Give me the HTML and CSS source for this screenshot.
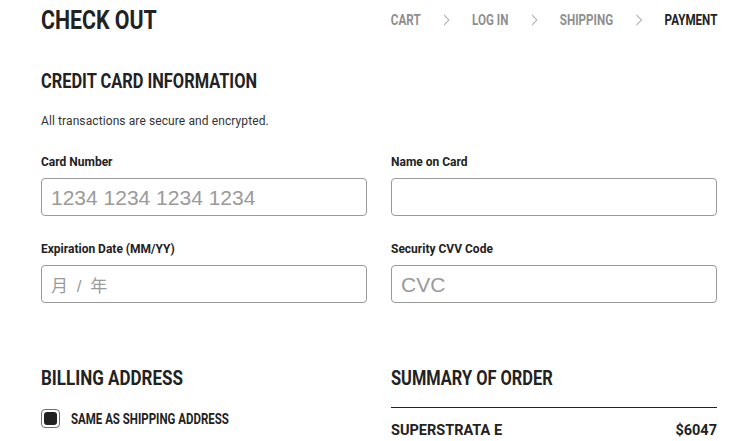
FILE: index.html
```html
<!DOCTYPE html>
<html lang="en">
<head>
<meta charset="utf-8">
<title>Check Out</title>
<link rel="stylesheet" href="styles.css">
</head>
<body>
<div class="page">
  <header class="topbar">
    <h1 class="title"><span class="cond">CHECK OUT</span></h1>
    <nav class="crumbs">
      <span class="crumb">CART</span>
      <svg class="chev" width="8" height="12" viewBox="0 0 8 12"><polyline points="1,1 7,6 1,11" fill="none" stroke="#b0b0b0" stroke-width="1.1"/></svg>
      <span class="crumb">LOG IN</span>
      <svg class="chev" width="8" height="12" viewBox="0 0 8 12"><polyline points="1,1 7,6 1,11" fill="none" stroke="#b0b0b0" stroke-width="1.1"/></svg>
      <span class="crumb">SHIPPING</span>
      <svg class="chev" width="8" height="12" viewBox="0 0 8 12"><polyline points="1,1 7,6 1,11" fill="none" stroke="#b0b0b0" stroke-width="1.1"/></svg>
      <span class="crumb active">PAYMENT</span>
    </nav>
  </header>

  <section class="card-info">
    <h2 class="section-title"><span class="cond">CREDIT CARD INFORMATION</span></h2>
    <p class="note">All transactions are secure and encrypted.</p>
    <div class="fields">
      <div class="field">
        <label class="label">Card Number</label>
        <div class="input placeholder">1234 1234 1234 1234</div>
      </div>
      <div class="field">
        <label class="label">Name on Card</label>
        <div class="input"></div>
      </div>
      <div class="field">
        <label class="label">Expiration Date (MM/YY)</label>
        <div class="input placeholder cjk">月 / 年</div>
      </div>
      <div class="field">
        <label class="label">Security CVV Code</label>
        <div class="input placeholder">CVC</div>
      </div>
    </div>
  </section>

  <section class="bottom">
    <div class="billing">
      <h2 class="section-title"><span class="cond wide">BILLING ADDRESS</span></h2>
      <div class="check-row">
        <span class="checkbox"><span class="check-fill"></span></span>
        <span class="check-label cond">SAME AS SHIPPING ADDRESS</span>
      </div>
    </div>
    <div class="summary">
      <h2 class="section-title"><span class="cond">SUMMARY OF ORDER</span></h2>
      <div class="summary-line">
        <span class="item">SUPERSTRATA E</span>
        <span class="price">$6047</span>
      </div>
    </div>
  </section>
</div>
</body>
</html>
```
FILE: styles.css
```css
* { box-sizing: border-box; }
html, body { margin: 0; padding: 0; background: #fff; }
body {
  font-family: Roboto, "Noto Sans", sans-serif;
  color: #222;
  height: 441px;
  overflow: hidden;
}
.page {
  padding: 0 16px 0 41px;
}
.cond {
  display: inline-block;
  white-space: nowrap;
  transform: scaleX(0.82);
  transform-origin: left center;
}
.cond.wide { transform: scaleX(0.85); }

.topbar {
  height: 40px;
  display: flex;
  align-items: center;
  justify-content: space-between;
}
.title {
  margin: 0;
  font-size: 26px;
  line-height: 40px;
  font-weight: 700;
  color: #222;
}
.crumbs {
  display: flex;
  align-items: center;
  gap: 27px;
  line-height: 40px;
  transform: scaleX(0.83);
  transform-origin: right center;
}
.crumb {
  font-size: 14px;
  font-weight: 700;
  color: #8f8f8f;
}
.crumb.active { color: #222; }
.chev { display: block; }

.section-title {
  margin: 0;
  font-size: 20px;
  line-height: 24px;
  font-weight: 700;
  color: #222;
}
.card-info .section-title { margin-top: 29px; }
.note {
  margin: 20px 0 0;
  font-size: 12px;
  line-height: 16px;
  letter-spacing: 0.1px;
  color: #333;
}
.fields {
  margin-top: 25px;
  display: grid;
  grid-template-columns: 1fr 1fr;
  column-gap: 24px;
  row-gap: 25px;
}
.field { display: flex; flex-direction: column; }
.label {
  font-size: 12px;
  line-height: 16px;
  font-weight: 700;
  color: #222;
}
.input {
  margin-top: 8px;
  height: 38px;
  border: 1px solid #9a9a9a;
  border-radius: 4px;
  padding: 1px 9px 0;
  display: flex;
  align-items: center;
  font-family: "Liberation Sans", Arial, sans-serif;
  font-size: 21px;
}
.placeholder { color: #9a9a9a; }
.cjk {
  font-family: "Liberation Sans", "Noto Sans CJK SC", sans-serif;
  font-size: 17px;
  word-spacing: 4px;
}

.bottom {
  margin-top: 63px;
  display: grid;
  grid-template-columns: 1fr 1fr;
  column-gap: 24px;
}
.check-row {
  margin-top: 19px;
  display: flex;
  align-items: center;
  gap: 11px;
}
.checkbox {
  flex: none;
  width: 19px;
  height: 19px;
  border: 1px solid #707070;
  border-radius: 4px;
  padding: 2px;
  display: block;
}
.check-fill {
  display: block;
  width: 100%;
  height: 100%;
  background: #222;
  border-radius: 3px;
}
.check-label {
  font-size: 14px;
  font-weight: 700;
  color: #222;
}
.summary-line {
  margin-top: 17px;
  border-top: 1px solid #222;
  padding-top: 13px;
  display: flex;
  justify-content: space-between;
  font-size: 14.5px;
  line-height: 20px;
  font-weight: 700;
  color: #222;
}
```
